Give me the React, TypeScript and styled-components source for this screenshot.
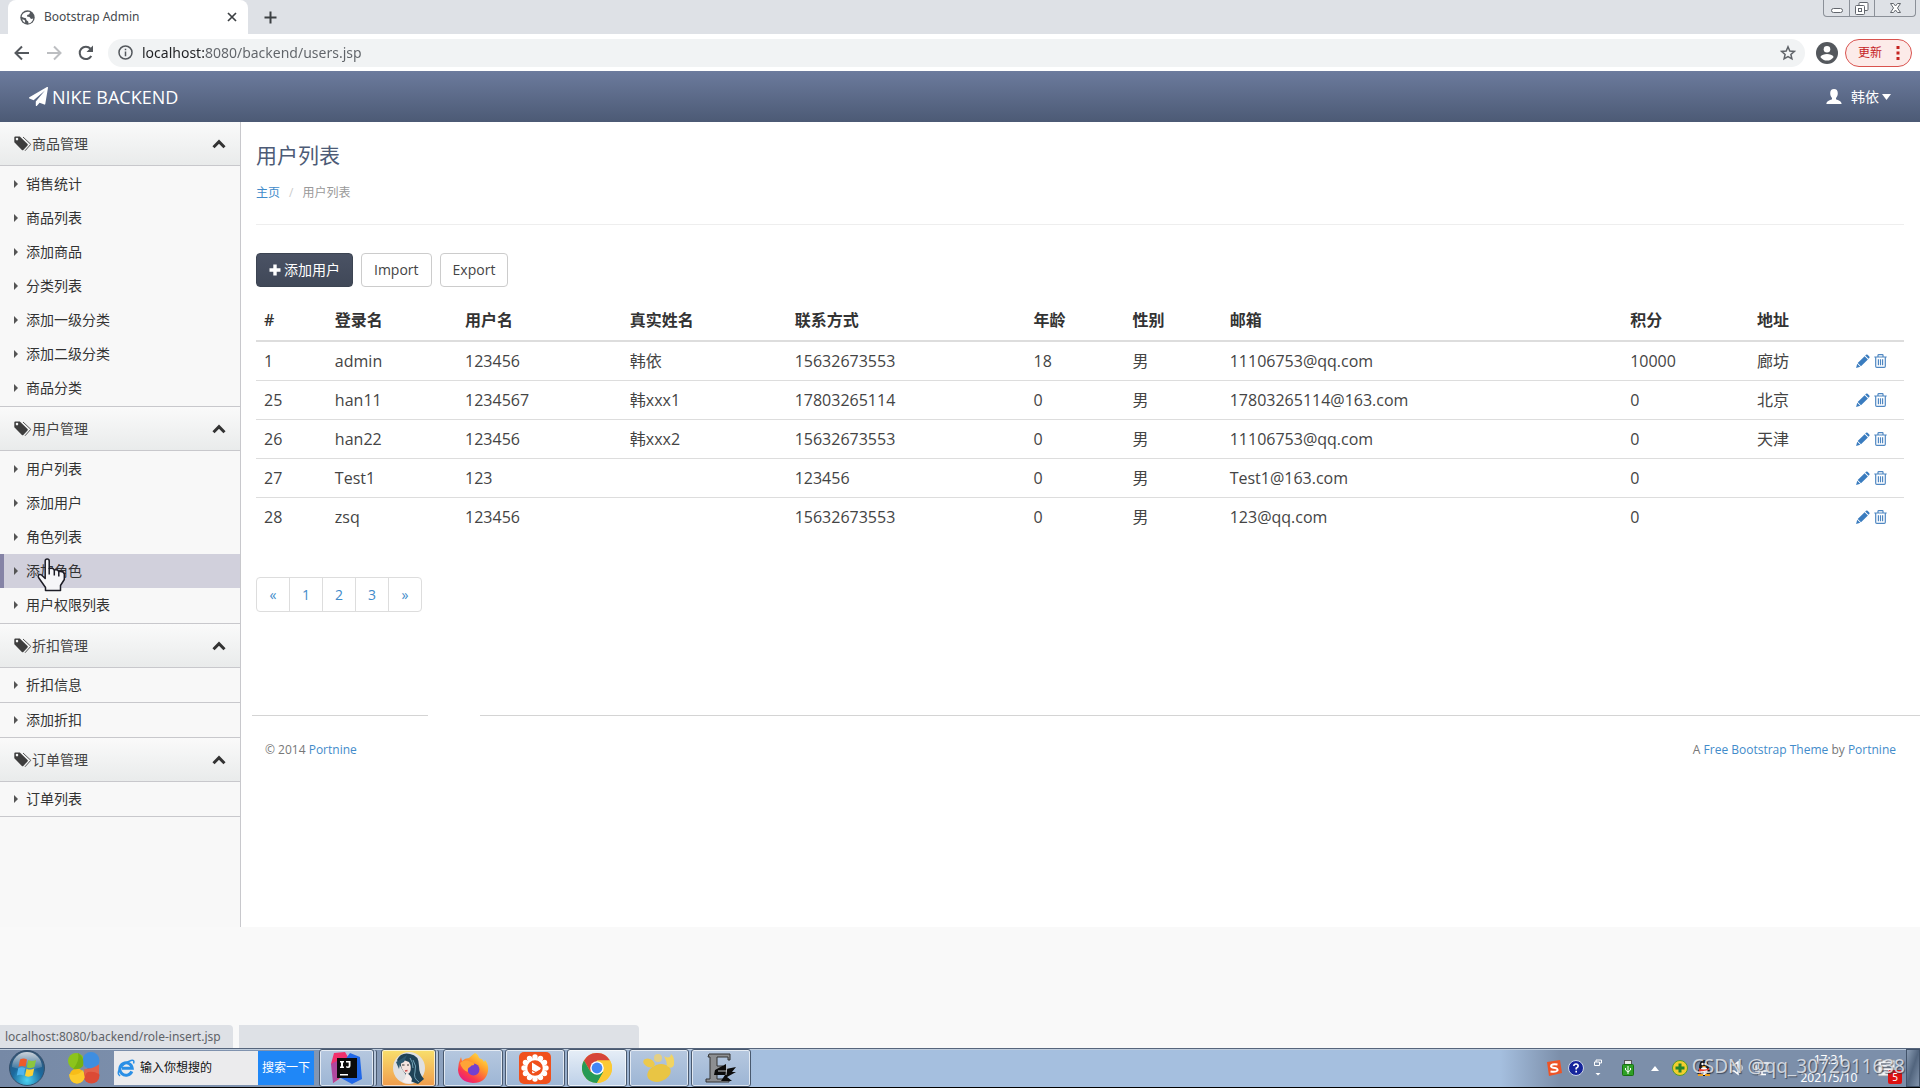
import React from "react";
import styled, { createGlobalStyle, css } from "styled-components";

const pageFont = `"Open Sans", "Noto Sans CJK SC", sans-serif`;
const systemFont = `"Noto Sans", "Noto Sans CJK SC", sans-serif`;

const GlobalStyle = createGlobalStyle`
  *, *::before, *::after { box-sizing: border-box; }
  body { margin: 0; background: #f9f9f9; color: #444; font: 14px/20px ${pageFont}; }
  button, input { font: inherit; margin: 0; padding: 0; border: 0; background: none; color: inherit; }
  a { color: #428bca; text-decoration: none; }
  ul, ol { list-style: none; margin: 0; padding: 0; }
  h1, p { margin: 0; }
  svg { display: block; flex: none; }
`;

const Screen = styled.div`
  display: flex;
  flex-direction: column;
  min-height: 100vh;
`;

/* ---------- browser chrome ---------- */

const TabStrip = styled.div`
  display: flex;
  align-items: flex-start;
  height: 34px;
  padding-left: 8px;
  background: #dee1e6;
  font: 12px/18px ${systemFont};
  color: #45494e;
`;

const Tab = styled.div`
  display: flex;
  align-items: center;
  gap: 9px;
  width: 240px;
  height: 34px;
  padding: 0 11px 0 12px;
  border-radius: 8px 8px 0 0;
  background: #fff;
`;

const TabTitle = styled.span`
  flex: 1;
`;

const IconButton = styled.button`
  display: flex;
  align-items: center;
  justify-content: center;
  width: ${(p: { $w?: number }) => p.$w ?? 16}px;
  height: 34px;
`;

const WindowControls = styled.div`
  display: flex;
  height: 17px;
  margin: 0 4px 0 auto;
  border: 1px solid #8b9098;
  border-top: 0;
  border-radius: 0 0 4px 4px;
`;

const WindowButton = styled.button<{ $w: number }>`
  display: flex;
  justify-content: center;
  width: ${(p) => p.$w}px;
  height: 16px;
  & + & { border-left: 1px solid #8b9098; }
`;

const Toolbar = styled.div`
  display: flex;
  align-items: center;
  height: 37px;
  padding: 0 8px 0 6px;
  background: #fff;
`;

const AddressBar = styled.div`
  display: flex;
  align-items: center;
  flex: 1;
  gap: 9px;
  height: 28px;
  margin: 0 11px 0 6px;
  padding: 0 9px 0 10px;
  border-radius: 14px;
  background: #f1f3f4;
`;

const AddressInput = styled.input`
  flex: 1;
  min-width: 0;
  height: 24px;
  font: 14px/24px ${systemFont};
  color: #5f6368;
  background: linear-gradient(to right, #202124 64px, #5f6368 64px);
  background-clip: text;
  -webkit-background-clip: text;
  -webkit-text-fill-color: transparent;
  outline: 0;
`;

const UpdateButton = styled.button`
  display: flex;
  align-items: center;
  justify-content: space-between;
  width: 67px;
  height: 28px;
  margin-left: 7px;
  padding: 0 11px 0 12px;
  border: 1px solid #d9534f;
  border-radius: 14px;
  background: #fcebe9;
  color: #c5221f;
  font: 12px/18px ${systemFont};
`;

/* ---------- page ---------- */

const Navbar = styled.header`
  display: flex;
  align-items: center;
  justify-content: space-between;
  height: 51px;
  padding: 0 29px 0 29px;
  background: linear-gradient(#6c7b9d, #4c5a75);
  color: #fff;
`;

const Brand = styled.a`
  display: flex;
  align-items: center;
  gap: 4px;
  color: #fff;
  font-size: 18px;
  line-height: 24px;
`;

const UserMenu = styled.button`
  display: flex;
  align-items: center;
  gap: 3px;
  height: 30px;
  svg:first-child { margin-right: 6px; }
`;

const Shell = styled.div`
  display: flex;
`;

const Sidebar = styled.nav`
  width: 241px;
  padding-bottom: 110px;
  border-right: 1px solid #c8c8cc;
  background: #f8f8f8;
`;

const GroupHeader = styled.button`
  display: flex;
  align-items: center;
  width: 100%;
  height: 45px;
  padding: 0 14px;
  border-top: 1px solid #c8c8cc;
  border-bottom: 1px solid #c8c8cc;
  background: linear-gradient(#fafafa, #e9ebeb);
  color: #444;
  text-align: left;
  section:first-child > & { height: 44px; border-top: 0; }
  span { flex: 1; }
`;

const MenuList = styled.ul<{ $ruled?: boolean }>`
  padding: 1px 0;
  ${(p) =>
    p.$ruled &&
    css`
      padding: 0;
      li + li { border-top: 1px solid #c8c8cc; }
    `}
  section:last-child > & { border-bottom: 1px solid #c8c8cc; }
`;

const MenuLink = styled.a<{ $hover?: boolean }>`
  position: relative;
  display: flex;
  align-items: center;
  gap: 8px;
  height: 34px;
  padding-left: 10px;
  border-left: 4px solid ${(p) => (p.$hover ? "#8583a6" : "transparent")};
  background: ${(p) => (p.$hover ? "#d1d0dc" : "none")};
  color: #333;
`;

const Pointer = styled.svg`
  position: absolute;
  left: 33px;
  top: 4px;
`;

const Main = styled.main`
  flex: 1;
  min-width: 0;
  background: #fff;
`;

const Content = styled.div`
  padding: 18px 16px 0 15px;
`;

const Title = styled.h1`
  font-size: 21px;
  line-height: 30px;
  font-weight: 400;
  color: #4d5b76;
`;

const Breadcrumb = styled.ol`
  display: flex;
  gap: 9px;
  margin-top: 14px;
  padding-bottom: 22px;
  border-bottom: 1px solid #eee;
  font-size: 12px;
  line-height: 18px;
  color: #999;
  li + li { display: flex; gap: 9px; }
  li + li::before { content: "/"; color: #ccc; }
`;

const Actions = styled.div`
  display: flex;
  gap: 8px;
  margin: 28px 0 13px;
`;

const Button = styled.button<{ $primary?: boolean }>`
  display: flex;
  align-items: center;
  gap: 3px;
  height: 34px;
  padding: 0 12px;
  border: 1px solid ${(p) => (p.$primary ? "#3c4452" : "#ccc")};
  border-radius: 4px;
  background: ${(p) => (p.$primary ? "linear-gradient(#4a5264, #404858)" : "#fff")};
  color: ${(p) => (p.$primary ? "#fff" : "#444")};
`;

const UserTable = styled.table`
  width: 100%;
  table-layout: fixed;
  border-collapse: separate;
  border-spacing: 0;
  font-size: 16px;
  line-height: 22px;
  text-align: left;
  th {
    height: 42px;
    padding: 0 8px;
    border-bottom: 2px solid #ddd;
    color: #333;
    font-weight: 600;
  }
  td {
    height: 39px;
    padding: 0 8px;
    border-bottom: 1px solid #ddd;
  }
  tr:last-child td { border-bottom-color: transparent; }
`;

const Col = styled.col<{ $share?: number }>`
  width: ${(p) => (p.$share ? `${p.$share}%` : "auto")};
`;

const RowActions = styled.div`
  display: flex;
  gap: 4px;
`;

const Pagination = styled.ul`
  display: flex;
  margin-top: 40px;
  li { margin-right: -1px; }
  a {
    display: block;
    width: 34px;
    border: 1px solid #ddd;
    line-height: 33px;
    text-align: center;
  }
  li:first-child a { border-radius: 4px 0 0 4px; }
  li:last-child a { border-radius: 0 4px 4px 0; }
`;

const FooterRules = styled.div`
  display: flex;
  gap: 52px;
  margin: 103px 0 25px 11px;
`;

const Rule = styled.hr<{ $w?: number }>`
  ${(p) => (p.$w ? `width: ${p.$w}px;` : "flex: 1;")}
  height: 1px;
  margin: 0;
  border: 0;
  background: #d4d4d4;
`;

const Footer = styled.footer`
  font-size: 12px;
  line-height: 18px;
  color: #777;
`;

const FooterText = styled.div`
  display: flex;
  justify-content: space-between;
  padding: 0 24px;
`;

const StatusRow = styled.div`
  display: flex;
  gap: 6px;
  margin-top: auto;
`;

const StatusBubble = styled.div<{ $w: number }>`
  width: ${(p) => p.$w}px;
  height: 23px;
  padding-left: 5px;
  border-radius: 0 4px 0 0;
  background: #dee1e6;
  color: #5f6368;
  font: 12px/23px ${systemFont};
`;

/* ---------- taskbar ---------- */

const Taskbar = styled.div`
  position: relative;
  display: flex;
  align-items: center;
  height: 40px;
  border-top: 1px solid #56657c;
  border-bottom: 1px solid #000;
  background: linear-gradient(
    to right,
    #7689a6 0,
    #8396b2 320px,
    #a5bfdf 760px,
    #a5bfdf calc(100% - 420px),
    #7c8faa calc(100% - 360px),
    #7c8faa 100%
  );
  box-shadow: inset 0 1px 0 #c0cede;
  font: 12px/18px ${systemFont};
  color: #fff;
`;

const Launcher = styled.button<{ $w: number }>`
  display: flex;
  justify-content: center;
  width: ${(p) => p.$w}px;
`;

const SearchBox = styled.form`
  display: flex;
  width: 200px;
  height: 34px;
  background: #ebebed;
`;

const SearchLabel = styled.label`
  display: flex;
  align-items: center;
  gap: 5px;
  flex: 1;
  min-width: 0;
  padding-left: 3px;
  input {
    flex: 1;
    min-width: 0;
    color: #111;
    outline: 0;
  }
  input::placeholder { color: #111; opacity: 1; }
`;

const SearchButton = styled.button`
  width: 56px;
  background: #1f87f7;
  color: #fff;
`;

const Tasks = styled.div`
  display: flex;
  gap: 2px;
  height: 38px;
  margin-left: 5px;
`;

const taskFills = {
  plain: "linear-gradient(#b6c8df, #9db6d5)",
  active: "linear-gradient(#e6eef7, #bdd0e8)",
  alert: "linear-gradient(#f8df6c, #f09c4c)",
};

const Task = styled.button<{ $fill?: keyof typeof taskFills; $stacked?: boolean }>`
  display: flex;
  align-items: center;
  justify-content: center;
  width: ${(p) => (p.$stacked ? 55 : 60)}px;
  height: 38px;
  border: 1px solid #49596f;
  border-radius: 3px;
  background: ${(p) => taskFills[p.$fill ?? "plain"]};
  box-shadow: inset 0 0 0 1px rgba(255, 255, 255, 0.65)
    ${(p) => (p.$stacked ? ", 3px 0 0 -1px #b5c5da, 4px 0 0 -1px #49596f" : "")};
  margin-right: ${(p) => (p.$stacked ? 5 : 0)}px;
`;

const Tray = styled.div`
  display: flex;
  align-items: center;
  height: 38px;
  margin-left: auto;
`;

const TrayItem = styled.span<{ $w: number }>`
  position: relative;
  display: flex;
  align-items: center;
  justify-content: center;
  width: ${(p) => p.$w}px;
  height: 38px;
`;

const Clock = styled.time`
  display: flex;
  flex-direction: column;
  align-items: center;
  width: 80px;
  padding-top: 2px;
`;

const Badge = styled.span`
  position: absolute;
  right: 4px;
  bottom: 3px;
  width: 14px;
  height: 14px;
  border-radius: 2px;
  background: #dd1111;
  font-size: 10px;
  line-height: 14px;
  text-align: center;
`;

const ShowDesktop = styled.button`
  width: 14px;
  height: 38px;
  border: 1px solid #42536a;
  background: linear-gradient(to right bottom, #8a9cb4, #52657e 50%, #8193ab);
`;

const Watermark = styled.span`
  position: absolute;
  right: 15px;
  top: 2px;
  color: rgba(228, 231, 236, 0.85);
  font-size: 19px;
  line-height: 30px;
  text-shadow: 1px 1px 1px rgba(40, 50, 65, 0.7);
  pointer-events: none;
`;

/* ---------- icons ---------- */

const GlobeIcon = () => (
  <svg width="15" height="15" viewBox="0 0 15 15">
    <circle cx="7.500" cy="7.500" r="7.200" fill="#54585d" />
    <path d="M8 1.800 L10 2 L9.300 4.200 L7.200 5 L7 6.600 L9.500 7 L11 9 L13.200 8.600 C13 11 11 13.200 8.600 13.600 L8.200 11.500 L6.500 10.300 L6 8.300 L3 7.600 L1.600 6.600 C2 4 4.200 1.900 8 1.800Z" fill="#fff" />
    <path d="M2.200 9.200 L4.600 9.900 L5.300 12.400 L4.600 12.600 C3.400 11.900 2.600 10.700 2.200 9.200Z" fill="#fff" />
  </svg>
);
const CloseIcon = () => (
  <svg width="10" height="10" viewBox="0 0 10 10" stroke="#3c4043" strokeWidth="1.700"><path d="M1 1 9 9M9 1 1 9" /></svg>
);
const PlusIcon = () => (
  <svg width="13" height="13" viewBox="0 0 13 13" stroke="#3c4043" strokeWidth="2"><path d="M6.500 0.500V12.500M0.500 6.500H12.500" /></svg>
);
const ArrowIcon = ({ forward }: { forward?: boolean }) => (
  <svg width="16" height="16" viewBox="0 0 16 16" fill="none" stroke={forward ? "#bcbec1" : "#54585d"} strokeWidth="2">
    <path d={forward ? "M1 8H14M8 1.500 14.500 8 8 14.500" : "M15 8H2M8 1.500 1.500 8 8 14.500"} />
  </svg>
);
const ReloadIcon = () => (
  <svg width="16" height="16" viewBox="0 0 16 16">
    <path d="M13.300 11A6.200 6.200 0 1 1 12.500 3.700" fill="none" stroke="#54585d" strokeWidth="2" />
    <path d="M15 0.500V7H8.500Z" fill="#54585d" />
  </svg>
);
const InfoIcon = () => (
  <svg width="15" height="15" viewBox="0 0 15 15" fill="none" stroke="#54585d" strokeWidth="1.500">
    <circle cx="7.500" cy="7.500" r="6.500" /><path d="M7.500 6.500V11.200M7.500 3.800V5.300" />
  </svg>
);
const StarIcon = () => (
  <svg width="16" height="16" viewBox="0 0 16 16" fill="none" stroke="#5f6368" strokeWidth="1.500">
    <path d="M8 1.800 9.800 6 14.300 6.400 10.900 9.400 11.900 13.800 8 11.500 4.100 13.800 5.100 9.400 1.700 6.400 6.200 6Z" />
  </svg>
);
const AvatarIcon = () => (
  <svg width="22" height="22" viewBox="0 0 22 22">
    <circle cx="11" cy="11" r="11" fill="#54585d" /><circle cx="11" cy="7.200" r="3.300" fill="#fff" />
    <path d="M4.300 15C5.500 12.800 8.500 12 11 12S16.500 12.800 17.700 15C16 17.500 13.500 18.600 11 18.600S6 17.500 4.300 15Z" fill="#fff" />
  </svg>
);
const DotsIcon = () => (
  <svg width="4" height="14" viewBox="0 0 4 14" fill="#c5221f"><path d="M.5 0h3v3h-3zM.5 5.500h3v3h-3zM.5 11h3v3h-3z" /></svg>
);
const PlaneIcon = () => (
  <svg width="19" height="19" viewBox="0 0 1792 1792" fill="#fff">
    <path d="M1764 11q33 24 27 64l-256 1536q-5 29-32 45-14 8-31 8-11 0-24-5l-453-185-242 295q-18 23-49 23-13 0-22-4-19-7-30.500-23.500t-11.500-36.500v-349l864-1059-1069 925-395-162q-37-14-40-55-2-40 32-59l1664-960q15-9 32-9 20 0 36 11z" />
  </svg>
);
const PersonIcon = () => (
  <svg width="16" height="15" viewBox="0 0 16 15" fill="#fff">
    <path d="M8 0C10.500 0 11.800 1.600 11.800 4.200 11.800 6.400 11 7.800 10 8.900V10.200C12.500 11.300 15.600 12 15.600 15H.4C.4 12 3.500 11.300 6 10.200V8.900C5 7.800 4.200 6.400 4.200 4.200 4.200 1.600 5.500 0 8 0Z" />
  </svg>
);
const CaretDown = () => (
  <svg width="9" height="6" viewBox="0 0 9 6" fill="#fff"><path d="M0 0H9L4.500 6Z" /></svg>
);
const TagsIcon = () => (
  <svg width="18" height="16" viewBox="0 0 18 16">
    <path d="M0.300 1.500Q0.300.5 1.300.5H5.800L13.500 8Q14.200 8.700 13.500 9.400L9.300 14Q8.600 14.700 7.900 14L.3 6.300ZM3 4.400A1.300 1.300 0 1 0 3 1.800 1.300 1.300 0 0 0 3 4.400Z" fill="#3d3d3d" fillRule="evenodd" />
    <path d="M9 1 16.800 8.300 11 14.800" fill="none" stroke="#555" strokeWidth="1" />
  </svg>
);
const ChevronUp = () => (
  <svg width="14" height="10" viewBox="0 0 14 10" fill="none" stroke="#333" strokeWidth="3"><path d="M1.500 8.200 7 2.700 12.500 8.200" /></svg>
);
const CaretRight = () => (
  <svg width="4" height="8" viewBox="0 0 4 8" fill="#555"><path d="M0 0V8L4 4Z" /></svg>
);
const BoldPlus = () => (
  <svg width="12" height="12" viewBox="0 0 12 12" fill="#fff"><path d="M4.300.5h3.400v3.800h3.800v3.400H7.700v3.800H4.300V7.700H.5V4.300h3.800z" /></svg>
);
const PencilIcon = () => (
  <svg width="14" height="14" viewBox="0 0 14 14" fill="#3a7cbf">
    <path d="M10 .8Q10.800 0 11.600.8L13.300 2.500Q14 3.300 13.300 4L12.500 4.800 9.200 1.600ZM8.600 2.200 11.900 5.400 5 12.300 1.700 9ZM1.200 9.700 4.300 12.800.1 14Z" />
  </svg>
);
const TrashIcon = () => (
  <svg width="13" height="14" viewBox="0 0 13 14" fill="none" stroke="#4f87c2" strokeWidth="1.200">
    <path d="M.3 3H12.700M4 3V1.200Q4 .7 4.500.7H8.500Q9 .7 9 1.200V3M1.700 3V12.200Q1.700 13.300 2.800 13.300H10.200Q11.300 13.300 11.300 12.200V3M4.400 5.300V11.200M6.500 5.300V11.200M8.600 5.300V11.200" />
  </svg>
);
const HandPointer = () => (
  <Pointer width="30" height="34" viewBox="0 0 30 34" aria-hidden="true">
    <path
      d="M8.200 3Q8.200 1 10.200 1T12.200 3V10.500Q16 9.500 17.300 12 20.500 11 21.800 13.600 26.500 12.600 27.300 16V21.500L23.500 27.500V32.500H8.500V29.500L1.500 19.500Q.5 17.500 2.500 16.600 4.300 16.200 5.600 18L8.200 20.500Z"
      fill="#f6f6f8" stroke="#1d1d26" strokeWidth="1.500" strokeLinejoin="round"
    />
    <path d="M12.200 10V16.500M17.300 12V17.500M21.800 13.600V18.500" stroke="#1d1d26" strokeWidth="1.500" />
  </Pointer>
);

const WindowsOrb = () => (
  <svg width="36" height="36" viewBox="0 0 36 36">
    <defs>
      <radialGradient id="orb" cx="50%" cy="85%" r="85%"><stop offset="0" stopColor="#4cd3f2" /><stop offset=".5" stopColor="#1b6a9f" /><stop offset="1" stopColor="#35506f" /></radialGradient>
      <linearGradient id="orbShine" x1="0" y1="0" x2="0" y2="1"><stop offset="0" stopColor="#fff" stopOpacity=".75" /><stop offset="1" stopColor="#fff" stopOpacity=".1" /></linearGradient>
    </defs>
    <circle cx="18" cy="18" r="17.500" fill="url(#orb)" stroke="#34506c" />
    <path d="M3 17A15 15 0 0 1 33 17Q18 22 3 17Z" fill="url(#orbShine)" />
    <path d="M11 9.500Q14.500 7.500 18 9.500L16.500 16.800Q13 15 9.500 16.800Z" fill="#ee5b2b" />
    <path d="M19.300 10Q23 12 27 10L25.500 17Q21.500 19 17.800 17.200Z" fill="#8cc63e" />
    <path d="M9.200 18.200Q12.700 16.500 16.200 18.300L14.700 25.500Q11.200 23.800 7.800 25.500Z" fill="#4fb4ee" />
    <path d="M17.500 18.700Q21.300 20.500 25.200 18.500L23.700 25.600Q19.800 27.700 16 25.800Z" fill="#fbd137" />
  </svg>
);
const PetalsIcon = () => (
  <svg width="32" height="32" viewBox="0 0 32 32">
    <circle cx="8" cy="9" r="8" fill="#8cc41c" />
    <circle cx="9" cy="24" r="7.500" fill="#f7bd18" />
    <circle cx="23.500" cy="23.500" r="8" fill="#dc4a35" />
    <circle cx="23" cy="8.500" r="8.500" fill="#3f8ee0" />
    <path d="M10 1Q17 6 15 14 11 18 5 17 12 9 10 1Z" fill="#76b013" />
    <path d="M1 22Q9 25 15 18L17 25Q15 31 9 31.500Q2 31 1 22Z" fill="#fccb2c" />
    <path d="M16 17Q22 18 31 12.500L31 22Q26 19 20 20Q16 22 17 29Z" fill="#e2624b" />
  </svg>
);
const BrowserE = () => (
  <svg width="18" height="18" viewBox="0 0 18 18" fill="none">
    <path d="M14.800 12.400A6.200 6.200 0 1 1 15.200 9.200H5" stroke="#2a8fe6" strokeWidth="3" />
    <path d="M3.200 16.800C-2 15 4 5 14 1.500 16.500.8 17.500 2 16.500 4.500" stroke="#2a8fe6" strokeWidth="1.500" />
  </svg>
);
const IntellijIcon = () => (
  <svg width="32" height="32" viewBox="0 0 32 32">
    <path d="M3 1 14 0 20 10 8 27 2 31 4 18 0 12Z" fill="#f0316c" />
    <path d="M0 12 8 8 10 24 2 31Z" fill="#b0489e" />
    <path d="M19 1 29 5 31 27 21 32 10 26 14 8Z" fill="#2168e8" />
    <path d="M6 6H26V26H6Z" fill="#0b0b0b" />
    <path d="M9 9H13V10.500H12V14.500H13V16H9V14.500H10V10.500H9ZM15 9H19.500V13.500Q19.500 16 17 16 15.500 16 14.800 15L15.800 13.900Q16.300 14.400 16.900 14.400 17.700 14.400 17.700 13.400V10.600H15ZM9 22H17V23.500H9Z" fill="#fff" />
  </svg>
);
const PortraitIcon = () => (
  <svg width="32" height="32" viewBox="0 0 32 32">
    <circle cx="16" cy="16" r="16" fill="#dfe0e2" />
    <path d="M4 8Q8 0 17 2 26 3 26 14 26 22 31 27L25 32 17 29 9 17Z" fill="#1f4256" />
    <path d="M8 9Q10 7 16 10 19 15 17 20 15 24 11 20 7 15 8 9Z" fill="#f3e3df" />
    <path d="M13 21Q17 22 19 27L18 31Q12 32 9 29 13 27 13 21Z" fill="#f7eeec" />
    <path d="M3 10Q9 7 14 3L11 10 7 12 6 17Z" fill="#2c5870" />
    <path d="M20 8Q24 14 22 20T26 30M17 6Q20 10 20 16" fill="none" stroke="#6fa0b4" />
    <path d="M12 19 14.500 18.500" stroke="#c8504f" strokeWidth="1.300" />
    <path d="M9 13H11.500M14 13H16" stroke="#333" />
  </svg>
);
const FirefoxIcon = () => (
  <svg width="32" height="32" viewBox="0 0 32 32">
    <defs><linearGradient id="fox" x1=".9" y1="0" x2=".2" y2="1"><stop offset="0" stopColor="#fff14b" /><stop offset=".4" stopColor="#ff9a2c" /><stop offset=".75" stopColor="#fb3b4b" /><stop offset="1" stopColor="#e3168c" /></linearGradient></defs>
    <path d="M18 1Q21 2 22 6 26 7 27 10L28 8Q32 13 31 19 29 31 16 31 2 30 1 18 1 11 4 5L5 9Q8 6 12 6 15 3 18 1Z" fill="url(#fox)" />
    <circle cx="16.500" cy="17.500" r="6" fill="#7340cf" />
    <path d="M3 11Q8 6 14 10 18 11 17 13 14 13 13 15 10 16 11 20 5 18 3 11Z" fill="#ffa436" />
  </svg>
);
const SunPlayerIcon = () => (
  <svg width="32" height="32" viewBox="0 0 32 32">
    <rect width="32" height="32" rx="5" fill="#f0501c" />
    {Array.from({ length: 12 }, (_, i) => (
      <circle key={i} cx={16 + 11 * Math.cos((i * Math.PI) / 6)} cy={16 + 11 * Math.sin((i * Math.PI) / 6)} r="2.700" fill="#fff" />
    ))}
    <circle cx="16" cy="16" r="9" fill="none" stroke="#fff" strokeWidth="2.500" />
    <path d="M13 10.500V20Q13 22 15 21L21 17.500Q22.500 16.500 21 15.500Z" fill="#fff" />
    <path d="M12 18 20 22" stroke="#f0501c" />
  </svg>
);
const ChromeIcon = () => (
  <svg width="30" height="30" viewBox="0 0 30 30">
    <circle cx="15" cy="15" r="15" fill="#fbc934" />
    <path d="M2 7.500A15 15 0 0 1 28 7.500H15L8.500 18.700Z" fill="#d6453a" />
    <path d="M2 7.500A15 15 0 0 0 15 30L21.500 18.700H8.500Z" fill="#279a55" />
    <path d="M28 7.500A15 15 0 0 1 15 30L21.500 18.700 15 7.500Z" fill="#fbc934" />
    <circle cx="15" cy="15" r="6.800" fill="#fff" /><circle cx="15" cy="15" r="5.400" fill="#4286f5" />
  </svg>
);
const PawIcon = () => (
  <svg width="32" height="30" viewBox="0 0 32 30">
    <ellipse cx="16" cy="20" rx="12" ry="8.500" transform="rotate(-18 16 20)" fill="#e9c544" />
    <ellipse cx="6" cy="10" rx="6" ry="4" transform="rotate(25 6 10)" fill="#ecc94d" />
    <ellipse cx="15" cy="5" rx="4" ry="4" fill="#e3cf85" />
    <path d="M21 3Q24 8 24 13 29 17 31 12 32 4 28 1 27 7 21 3Z" fill="#f1d463" />
  </svg>
);
const EditorIcon = () => (
  <svg width="32" height="30" viewBox="0 0 32 30">
    <path d="M4 1H25V7H23V4H12V13H18V17H12V26H24V29H1V26H5V4H3Z" fill="#8d8f92" stroke="#333" />
    <path d="M10 17 21 11V16L31 14 27 19H31L22 24 27 28H16L20 22 9 22Z" fill="#0c0c0c" />
    <path d="M13 18 22 18M22 13 21 22" stroke="#b9bcc0" />
  </svg>
);

/* ---------- data ---------- */

type Group = { title: string; items: string[]; ruled?: boolean };

const groups: Group[] = [
  { title: "商品管理", items: ["销售统计", "商品列表", "添加商品", "分类列表", "添加一级分类", "添加二级分类", "商品分类"] },
  { title: "用户管理", items: ["用户列表", "添加用户", "角色列表", "添加角色", "用户权限列表"] },
  { title: "折扣管理", items: ["折扣信息", "添加折扣"], ruled: true },
  { title: "订单管理", items: ["订单列表"], ruled: true },
];
const hoveredItem = "添加角色";

const columns: { label: string; share?: number }[] = [
  { label: "#", share: 4.3 },
  { label: "登录名", share: 7.9 },
  { label: "用户名", share: 10 },
  { label: "真实姓名", share: 10 },
  { label: "联系方式", share: 14.5 },
  { label: "年龄", share: 6 },
  { label: "性别", share: 5.9 },
  { label: "邮箱", share: 24.3 },
  { label: "积分", share: 7.7 },
  { label: "地址", share: 6 },
  { label: "" },
];

const users = [
  ["1", "admin", "123456", "韩依", "15632673553", "18", "男", "11106753@qq.com", "10000", "廊坊"],
  ["25", "han11", "1234567", "韩xxx1", "17803265114", "0", "男", "17803265114@163.com", "0", "北京"],
  ["26", "han22", "123456", "韩xxx2", "15632673553", "0", "男", "11106753@qq.com", "0", "天津"],
  ["27", "Test1", "123", "", "123456", "0", "男", "Test1@163.com", "0", ""],
  ["28", "zsq", "123456", "", "15632673553", "0", "男", "123@qq.com", "0", ""],
];

/* ---------- sections ---------- */

const BrowserChrome = () => (
  <>
    <TabStrip>
      <Tab>
        <GlobeIcon />
        <TabTitle>Bootstrap Admin</TabTitle>
        <IconButton $w={10} aria-label="Close tab"><CloseIcon /></IconButton>
      </Tab>
      <IconButton $w={44} aria-label="New tab"><PlusIcon /></IconButton>
      <WindowControls>
        <WindowButton $w={25} aria-label="Minimize">
          <svg width="24" height="16" viewBox="0 0 24 16"><rect x="6.500" y="8.500" width="11" height="4" rx="2" fill="#fff" stroke="#62666d" /></svg>
        </WindowButton>
        <WindowButton $w={25} aria-label="Restore">
          <svg width="24" height="16" viewBox="0 0 24 16" fill="#fff" stroke="#62666d">
            <rect x="9" y="2.500" width="9" height="8" rx="1" /><rect x="5.500" y="5.500" width="9" height="9" rx="1" /><rect x="8.500" y="8.500" width="3" height="3" />
          </svg>
        </WindowButton>
        <WindowButton $w={41} aria-label="Close">
          <svg width="24" height="16" viewBox="0 0 24 16"><path d="M7.500 3.500H10.500L12.500 6 14.500 3.500H17.500L14.500 8 17.500 12.500H14.500L12.500 10 10.500 12.500H7.500L10.500 8Z" fill="#fff" stroke="#62666d" /></svg>
        </WindowButton>
      </WindowControls>
    </TabStrip>
    <Toolbar>
      <IconButton $w={32} aria-label="Back"><ArrowIcon /></IconButton>
      <IconButton $w={32} aria-label="Forward"><ArrowIcon forward /></IconButton>
      <IconButton $w={32} aria-label="Reload"><ReloadIcon /></IconButton>
      <AddressBar>
        <InfoIcon />
        <AddressInput aria-label="Address" defaultValue="localhost:8080/backend/users.jsp" />
        <IconButton aria-label="Bookmark"><StarIcon /></IconButton>
      </AddressBar>
      <IconButton $w={22} aria-label="Profile"><AvatarIcon /></IconButton>
      <UpdateButton>更新<DotsIcon /></UpdateButton>
    </Toolbar>
  </>
);

const SideMenu = () => (
  <Sidebar>
    {groups.map((group) => (
      <section key={group.title}>
        <GroupHeader>
          <TagsIcon />
          <span>{group.title}</span>
          <ChevronUp />
        </GroupHeader>
        <MenuList $ruled={group.ruled}>
          {group.items.map((item) => (
            <li key={item}>
              <MenuLink href="#" $hover={item === hoveredItem}>
                <CaretRight />
                {item}
                {item === hoveredItem && <HandPointer />}
              </MenuLink>
            </li>
          ))}
        </MenuList>
      </section>
    ))}
  </Sidebar>
);

const Users = () => (
  <Content>
    <Title>用户列表</Title>
    <Breadcrumb>
      <li><a href="#">主页</a></li>
      <li>用户列表</li>
    </Breadcrumb>
    <Actions>
      <Button $primary><BoldPlus />添加用户</Button>
      <Button>Import</Button>
      <Button>Export</Button>
    </Actions>
    <UserTable>
      <colgroup>{columns.map((c) => <Col key={c.label} $share={c.share} />)}</colgroup>
      <thead>
        <tr>{columns.map((c) => <th key={c.label}>{c.label}</th>)}</tr>
      </thead>
      <tbody>
        {users.map((row) => (
          <tr key={row[0]}>
            {row.map((cell, i) => <td key={i}>{cell}</td>)}
            <td>
              <RowActions>
                <a href="#" aria-label="Edit"><PencilIcon /></a>
                <a href="#" aria-label="Delete"><TrashIcon /></a>
              </RowActions>
            </td>
          </tr>
        ))}
      </tbody>
    </UserTable>
    <Pagination>
      {["«", "1", "2", "3", "»"].map((label) => <li key={label}><a href="#">{label}</a></li>)}
    </Pagination>
  </Content>
);

const SystemTaskbar = () => (
  <Taskbar>
    <Launcher $w={54} aria-label="Start"><WindowsOrb /></Launcher>
    <Launcher $w={60} aria-label="Desktop organizer"><PetalsIcon /></Launcher>
    <SearchBox>
      <SearchLabel>
        <BrowserE />
        <input aria-label="Search" placeholder="输入你想搜的" />
      </SearchLabel>
      <SearchButton type="button">搜索一下</SearchButton>
    </SearchBox>
    <Tasks>
      <Task $stacked aria-label="IntelliJ IDEA"><IntellijIcon /></Task>
      <Task $stacked $fill="alert" aria-label="Chat"><PortraitIcon /></Task>
      <Task aria-label="Firefox"><FirefoxIcon /></Task>
      <Task aria-label="Player"><SunPlayerIcon /></Task>
      <Task $fill="active" aria-label="Chrome"><ChromeIcon /></Task>
      <Task aria-label="Database client"><PawIcon /></Task>
      <Task aria-label="Editor"><EditorIcon /></Task>
    </Tasks>
    <Tray>
      <TrayItem $w={22}>
        <svg width="16" height="16" viewBox="0 0 16 16"><path d="M1 2 14 0 16 13 3 16Z" fill="#ee5426" /><path d="M11.500 4.500Q5 3.500 5 6.300 5.500 8 9 8 12 8.500 11.500 10.500 10 12.500 4.500 11.500" fill="none" stroke="#fff" strokeWidth="2" /></svg>
      </TrayItem>
      <TrayItem $w={22}>
        <svg width="16" height="16" viewBox="0 0 16 16"><circle cx="8" cy="8" r="7.500" fill="#15249c" stroke="#ccd5e6" /><path d="M5.800 6Q6 4 8 4T10.200 6Q10.200 7 8.200 8.200V9.500M8.200 10.800V12.500" fill="none" stroke="#fff" strokeWidth="1.600" /></svg>
      </TrayItem>
      <TrayItem $w={22}>
        <svg width="10" height="18" viewBox="0 0 10 18" fill="none" stroke="#fff"><path d="M3 3V1H8.500V4H7M1.500 3H6.500V6.500H1.500Z" /><path d="M2.500 14H7.500L5 16.500Z" fill="#fff" stroke="none" /></svg>
      </TrayItem>
      <TrayItem $w={38}>
        <svg width="12" height="16" viewBox="0 0 12 16"><rect x="2.500" y=".5" width="7" height="4" fill="#e7e7e7" stroke="#555" /><rect x=".5" y="4.500" width="11" height="11" rx="1" fill="#2ea025" stroke="#17700f" /><path d="M6 6V14M3.500 8V10L6 12 8.500 10V8" fill="none" stroke="#fff" /></svg>
      </TrayItem>
      <TrayItem $w={16}>
        <svg width="8" height="5" viewBox="0 0 8 5" fill="#fff"><path d="M4 0 8 5H0Z" /></svg>
      </TrayItem>
      <TrayItem $w={34}>
        <svg width="16" height="16" viewBox="0 0 16 16"><circle cx="8" cy="8" r="7.500" fill="#f2ce2c" stroke="#4e9b2e" /><path d="M8 3.500V12.500M3.500 8H12.500" stroke="#23842b" strokeWidth="3" /></svg>
      </TrayItem>
      <TrayItem $w={14}>
        <svg width="16" height="16" viewBox="0 0 16 16"><path d="M3 9Q3 0 8 0T13 9L15 13 11 16H5L1 13Z" fill="#161616" /><ellipse cx="8" cy="11" rx="3.500" ry="4" fill="#fff" /><path d="M3 8Q8 11 13 8L13 10 5 11.500 5 14H3Z" fill="#e43a2a" /><circle cx="6.500" cy="4" r="1.200" fill="#fff" /><circle cx="9.500" cy="4" r="1.200" fill="#fff" /><path d="M5.500 6H10.500L8 7.500ZM2 14H7V16H2ZM9 14H14V16H9Z" fill="#f5a41d" /></svg>
      </TrayItem>
      <TrayItem $w={78}>
        <svg width="40" height="16" viewBox="0 0 40 16" fill="none" stroke="#fff" strokeWidth="1.500"><path d="M1 5H4L8 2V14L4 11H1ZM11 5Q13 8 11 11M26 3H38V11H26ZM32 11V14M28 14.500H36" /></svg>
      </TrayItem>
      <Clock><span>17:31</span><span>2021/5/10</span></Clock>
      <TrayItem $w={37}>
        <svg width="22" height="18" viewBox="0 0 22 18"><path d="M1 1H18V17H1Z" fill="#f5f6f8" stroke="#8c949f" /><path d="M4 5H15M4 8.500H15M4 12H11" stroke="#6c7683" strokeWidth="1.500" /></svg>
        <Badge>5</Badge>
      </TrayItem>
      <ShowDesktop aria-label="Show desktop" />
    </Tray>
    <Watermark>CSDN @qq_3072911638</Watermark>
  </Taskbar>
);

export default function App() {
  return (
    <Screen>
      <GlobalStyle />
      <BrowserChrome />
      <Navbar>
        <Brand href="#"><PlaneIcon />NIKE BACKEND</Brand>
        <UserMenu><PersonIcon />韩依<CaretDown /></UserMenu>
      </Navbar>
      <Shell>
        <SideMenu />
        <Main>
          <Users />
          <Footer>
            <FooterRules><Rule $w={176} /><Rule /></FooterRules>
            <FooterText>
              <p>© 2014 <a href="#">Portnine</a></p>
              <p>A <a href="#">Free Bootstrap Theme</a> by <a href="#">Portnine</a></p>
            </FooterText>
          </Footer>
        </Main>
      </Shell>
      <StatusRow>
        <StatusBubble $w={233}>localhost:8080/backend/role-insert.jsp</StatusBubble>
        <StatusBubble $w={400} />
      </StatusRow>
      <SystemTaskbar />
    </Screen>
  );
}
